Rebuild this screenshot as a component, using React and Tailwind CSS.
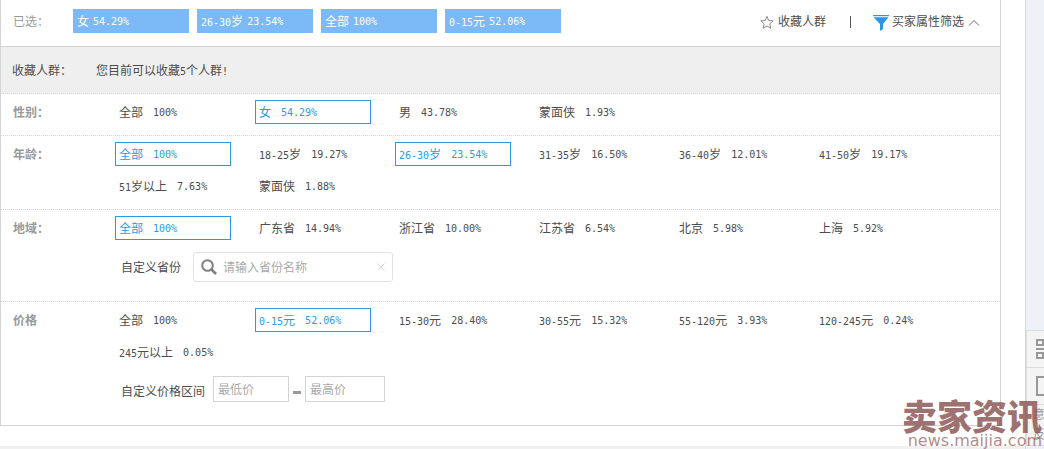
import React from "react";

const filters = [
  {
    title: "性别：",
    options: [
      { name: "全部", value: "100%" },
      { name: "女", value: "54.29%", active: true },
      { name: "男", value: "43.78%" },
      { name: "蒙面侠", value: "1.93%" },
    ],
  },
  {
    title: "年龄：",
    options: [
      { name: "全部", value: "100%", active: true },
      { range: "18-25", name: "岁", value: "19.27%" },
      { range: "26-30", name: "岁", value: "23.54%", active: true },
      { range: "31-35", name: "岁", value: "16.50%" },
      { range: "36-40", name: "岁", value: "12.01%" },
      { range: "41-50", name: "岁", value: "19.17%" },
      { range: "51", name: "岁以上", value: "7.63%" },
      { name: "蒙面侠", value: "1.88%" },
    ],
  },
  {
    title: "地域：",
    custom: "province",
    options: [
      { name: "全部", value: "100%", active: true },
      { name: "广东省", value: "14.94%" },
      { name: "浙江省", value: "10.00%" },
      { name: "江苏省", value: "6.54%" },
      { name: "北京", value: "5.98%" },
      { name: "上海", value: "5.92%" },
    ],
  },
  {
    title: "价格",
    custom: "price",
    options: [
      { name: "全部", value: "100%" },
      { range: "0-15", name: "元", value: "52.06%", active: true },
      { range: "15-30", name: "元", value: "28.40%" },
      { range: "30-55", name: "元", value: "15.32%" },
      { range: "55-120", name: "元", value: "3.93%" },
      { range: "120-245", name: "元", value: "0.24%" },
      { range: "245", name: "元以上", value: "0.05%" },
    ],
  },
];

const selected = [
  { name: "女", value: "54.29%" },
  { range: "26-30", name: "岁", value: "23.54%" },
  { name: "全部", value: "100%" },
  { range: "0-15", name: "元", value: "52.06%" },
];

const Num = ({ children }) => (
  <span className="font-['DejaVu_Sans_Mono',monospace] text-[10px]">{children}</span>
);

const OptionName = ({ range, name }) => (
  <span>
    {range && <Num>{range}</Num>}
    {name}
  </span>
);

const Option = ({ range, name, value, active }) => (
  <button
    type="button"
    aria-pressed={!!active}
    className={`mb-2 mr-6 flex h-6 w-[116px] items-center gap-2.5 whitespace-nowrap border pt-0.5 pl-[3px] ${
      active ? "border-[#2b9ae6] text-[#2b9ae6]" : "border-transparent"
    }`}
  >
    <OptionName range={range} name={name} />
    <Num>{value}</Num>
  </button>
);

const ProvinceSearch = () => (
  <div className="mt-1 mb-4 flex items-center gap-3 pl-1.5">
    <label htmlFor="province" className="pt-0.5">自定义省份</label>
    <div className="flex h-[30px] w-[200px] items-center rounded-[3px] border border-[#e2e2e2] px-[7px]">
      <svg className="h-4 w-4 shrink-0" viewBox="0 0 16 16" fill="none" stroke="#808080">
        <circle cx="6.5" cy="6.5" r="5.3" strokeWidth="2" />
        <path d="M10.5 10.5L15 15" strokeWidth="2.6" />
      </svg>
      <input
        id="province"
        type="text"
        placeholder="请输入省份名称"
        className="ml-1.5 min-w-0 flex-1 pt-0.5 outline-none placeholder:text-[#a9a9a9]"
      />
      <button type="button" aria-label="清空">
        <svg className="h-2 w-2" viewBox="0 0 8 8" stroke="#d8d8d8">
          <path d="M0.5 0.5L7.5 7.5M7.5 0.5L0.5 7.5" />
        </svg>
      </button>
    </div>
  </div>
);

const PriceRange = () => (
  <div className="mt-1 mb-5 flex items-center pl-1.5">
    <label htmlFor="min-price" className="mr-2 pt-1.5">自定义价格区间</label>
    <input
      id="min-price"
      type="text"
      placeholder="最低价"
      className="h-[26px] w-[76px] border border-[#d4d4d4] px-1 pt-0.5 outline-none placeholder:text-[#a9a9a9]"
    />
    <span className="mx-1 mt-1.5 h-[3px] w-2 bg-[#999]" />
    <input
      type="text"
      aria-label="最高价"
      placeholder="最高价"
      className="h-[26px] w-20 border border-[#d4d4d4] px-1 pt-0.5 outline-none placeholder:text-[#a9a9a9]"
    />
  </div>
);

const FilterRow = ({ title, options, custom }) => (
  <section className="flex border-b border-dotted border-[#d4d4d4] pt-1.5 pb-[3px] last:border-b-0">
    <h2 className="w-[114px] shrink-0 pl-3 pt-[5px] font-bold text-[#999]">{title}</h2>
    <div className="flex-1">
      <div className="flex flex-wrap">
        {options.map((option) => (
          <Option key={option.value + option.name} {...option} />
        ))}
      </div>
      {custom === "province" && <ProvinceSearch />}
      {custom === "price" && <PriceRange />}
    </div>
  </section>
);

const Header = () => (
  <header className="flex h-[47px] items-center border-b border-[#d4d4d4] pb-1 pl-3 pr-5">
    <span className="w-[60px] pt-0.5 text-[#999]">已选：</span>
    <div className="flex gap-2">
      {selected.map((tag) => (
        <button
          key={tag.value}
          type="button"
          className="flex h-6 w-[116px] items-center gap-1 whitespace-nowrap bg-[#7cb9f7] pt-0.5 pl-1 text-white"
        >
          <OptionName range={tag.range} name={tag.name} />
          <Num>{tag.value}</Num>
        </button>
      ))}
    </div>
    <div className="ml-auto flex items-center pt-0.5">
      <button type="button" className="flex items-center gap-1">
        <svg className="h-3.5 w-3.5" viewBox="0 0 14 14" fill="none" stroke="#8a8a8a">
          <path d="M7 1.500l1.700 4 4.500.4-3.400 2.900 1 4.400L7 10.900l-3.800 2.300 1-4.400L.8 5.900 5.300 5.500z" />
        </svg>
        收藏人群
      </button>
      <span className="mr-[22px] ml-6 h-3 w-px bg-[#555]" />
      <button type="button" className="flex items-center">
        <svg className="mr-[3px] mt-0.5 h-4 w-4" viewBox="0 0 16 16" fill="#2b95ea">
          <path d="M0 0h16v1.2H0z" />
          <path d="M0.5 2.2h15L10 9v5l-3 2V9z" />
        </svg>
        买家属性筛选
        <svg className="ml-1 mt-0.5 h-2 w-3" viewBox="0 0 12 8" fill="none" stroke="#666">
          <path d="M1 6.5l5-5 5 5" />
        </svg>
      </button>
    </div>
  </header>
);

const SideBar = () => (
  <aside className="flex w-[19px] shrink-0 flex-col overflow-hidden border-l border-[#d9d9d9] bg-[#edf1f7] pt-[330px] text-[#999]">
    <div className="border border-r-0 border-[#dcdcdc] bg-[#f4f4f4]">
      <button type="button" aria-label="二维码" className="flex h-9 items-center pl-[9px]">
        <svg className="h-5 w-5 shrink-0" viewBox="0 0 20 20" fill="none" stroke="#999" strokeWidth="2">
          <path d="M1 1h6v5H1zM1 14h6v5H1zM13 1h6v5h-6z" />
          <path d="M0 10h20" />
        </svg>
      </button>
      <button type="button" aria-label="手机" className="flex h-[37px] items-center border-t border-[#dcdcdc] pl-[9px]">
        <svg className="h-5 w-4 shrink-0" viewBox="0 0 16 20" fill="none" stroke="#999" strokeWidth="2">
          <path d="M1 1h14v18H1z" />
        </svg>
      </button>
      <button type="button" className="block border-t border-[#dcdcdc] pl-1.5 leading-5">
        意<br />反
      </button>
    </div>
  </aside>
);

const Watermark = () => (
  <div className="pointer-events-none absolute right-0.5 bottom-0 whitespace-nowrap text-right text-[#8f5a5a] opacity-85">
    <p className="text-[35px] leading-[30px] font-black">卖家资讯</p>
    <p className="font-['DejaVu_Sans',sans-serif] text-base leading-4 opacity-80">news.maijia.com</p>
  </div>
);

const App = () => {
  return (
    <div className="relative flex bg-white font-['Liberation_Sans','Noto_Sans_CJK_SC',sans-serif] text-xs text-[#4d4d4d]">
      <main className="min-w-0 flex-1">
        <div className="mr-6 border-x border-b border-[#d4d4d4]">
          <Header />
          <div className="flex h-[47px] items-center border-b border-dotted border-[#d4d4d4] bg-[#efefef] pt-0.5 pl-[11px]">
            <span className="w-[84px]">收藏人群：</span>
            <p>
              您目前可以收藏<Num>5</Num>个人群<Num>!</Num>
            </p>
          </div>
          {filters.map((filter) => (
            <FilterRow key={filter.title} {...filter} />
          ))}
        </div>
        <div className="mt-5 h-[3px] bg-[#f0f0f0]" />
      </main>
      <SideBar />
      <Watermark />
    </div>
  );
};

export default App;
